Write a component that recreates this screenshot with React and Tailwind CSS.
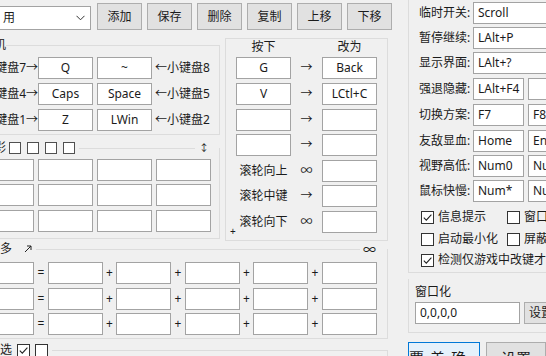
import React from "react";

const FONT = "font-['Noto_Sans','Noto_Sans_CJK_SC',sans-serif]";

function Key({ children, className = "" }) {
  return (
    <div
      className={`h-[22px] shrink-0 bg-white border border-[#a3a3a3] flex items-center justify-center whitespace-nowrap overflow-hidden ${className}`}
    >
      {children}
    </div>
  );
}

function Field({ children, className = "" }) {
  return (
    <div
      className={`h-[22px] shrink-0 bg-white border border-[#a3a3a3] flex items-center pl-[4px] whitespace-nowrap overflow-hidden ${className}`}
    >
      {children}
    </div>
  );
}

function Btn({ children, className = "" }) {
  return (
    <div
      className={`shrink-0 bg-[#e1e1e1] border border-[#adadad] flex items-center justify-center whitespace-nowrap ${className}`}
    >
      {children}
    </div>
  );
}

function Check({ checked = false }) {
  return (
    <div className="w-[13px] h-[13px] shrink-0 border border-[#333333] bg-white flex items-center justify-center">
      {checked && (
        <svg width="11" height="11" viewBox="0 0 11 11">
          <path d="M1.8 5.6 L4.3 8.1 L9.4 2.6" fill="none" stroke="#222" strokeWidth="1.1" />
        </svg>
      )}
    </div>
  );
}

function Square() {
  return <div className="w-[12px] h-[12px] shrink-0 border border-[#505050] bg-white" />;
}

const rowsA = [
  { l: "小键盘7→", a: "Q", b: "~", r: "←小键盘8" },
  { l: "小键盘4→", a: "Caps", b: "Space", r: "←小键盘5" },
  { l: "小键盘1→", a: "Z", b: "LWin", r: "←小键盘2" },
];

const rowsB = [
  { a: "G", m: "→", b: "Back", mt: "mt-[2px]" },
  { a: "V", m: "→", b: "LCtl+C", mt: "mt-[4px]" },
  { a: "", m: "→", b: "", mt: "mt-[4px]" },
  { a: "", m: "→", b: "", mt: "mt-[3px]" },
  { t: "滚轮向上", m: "∞", b: "", mt: "mt-[4px]" },
  { t: "滚轮中键", m: "→", b: "", mt: "mt-[3px]" },
  { t: "滚轮向下", m: "∞", b: "", mt: "mt-[4px]", plus: true },
];

const rowsR = [
  { l: "临时开关:", a: "Scroll", mt: "" },
  { l: "暂停继续:", a: "LAlt+P", mt: "mt-[3px]" },
  { l: "显示界面:", a: "LAlt+?", mt: "mt-[3px]" },
  { l: "强退隐藏:", a: "LAlt+F4", b: "", mt: "mt-[4px]" },
  { l: "切换方案:", a: "F7", b: "F8", mt: "mt-[4px]" },
  { l: "友敌显血:", a: "Home", b: "End", mt: "mt-[4px]" },
  { l: "视野高低:", a: "Num0", b: "Num.", mt: "mt-[3px]" },
  { l: "鼠标快慢:", a: "Num*", b: "Num/", mt: "mt-[3px]" },
];

export default function App() {
  return (
    <div
      className={`w-[546px] h-[356px] overflow-hidden bg-[#f0f0f0] flex text-[12px] leading-none text-[#1b1b1b] ${FONT}`}
    >
      {/* LEFT PART */}
      <div className="w-[400px] shrink-0 flex flex-col">
        {/* toolbar */}
        <div className="flex items-end h-[30px] shrink-0">
          <div className="w-[91px] h-[24px] bg-white border border-[#a3a3a3] border-l-0 flex items-center justify-between pl-[3px] pr-[5px]">
            <span>用</span>
            <svg width="9" height="6" viewBox="0 0 9 6">
              <path d="M0.5 0.8 L4.5 4.8 L8.5 0.8" fill="none" stroke="#333" strokeWidth="1" />
            </svg>
          </div>
          <div className="ml-[6px] flex gap-[5px]">
            {["添加", "保存", "删除", "复制", "上移", "下移"].map((t) => (
              <Btn key={t} className="w-[45px] h-[27px]">
                {t}
              </Btn>
            ))}
          </div>
        </div>

        {/* main row */}
        <div className="flex h-[211px] shrink-0">
          <div className="w-[220px] shrink-0 flex flex-col">
            {/* group A */}
            <fieldset className="-ml-[20px] mt-[7px] w-[240px] border border-[#dcdcdc] pb-[3px]">
              <legend className="ml-[13px] h-[16px] leading-[16px]">机</legend>
              <div className="flex flex-col gap-[4px] pt-[4px]">
                {rowsA.map((r) => (
                  <div key={r.a} className="flex items-center h-[22px]">
                    <div className="w-[57px] shrink-0 flex justify-end whitespace-nowrap">{r.l}</div>
                    <Key className="w-[55px]">{r.a}</Key>
                    <Key className="w-[55px] ml-[4px]">{r.b}</Key>
                    <div className="ml-[3px] whitespace-nowrap">{r.r}</div>
                  </div>
                ))}
              </div>
            </fieldset>

            {/* group C */}
            <fieldset className="-ml-[20px] mt-[5px] w-[240px] border border-[#dcdcdc] pb-[6px]">
              <legend className="w-full h-[16px] flex items-center">
                <span className="ml-[13px] leading-[16px]">彩</span>
                <div className="ml-[3px] flex gap-[6px]">
                  <Square />
                  <Square />
                  <Square />
                  <Square />
                </div>
                <div className="flex-1 h-px bg-[#dcdcdc] ml-[4px] mr-[4px]" />
                <span className="text-[10px] mr-[10px]">↕</span>
              </legend>
              <div className="flex flex-col pt-[3px]">
                {["mt-0", "mt-[3px]", "mt-[4px]"].map((m) => (
                  <div key={m} className={`flex h-[22px] gap-[4px] ${m}`}>
                    <Key className="w-[53px]" />
                    <Key className="w-[55px]" />
                    <Key className="w-[55px]" />
                    <Key className="w-[55px]" />
                  </div>
                ))}
              </div>
            </fieldset>
          </div>

          {/* group B */}
          <fieldset className="ml-[5px] mt-[8px] w-[163px] h-[203px] border border-[#dcdcdc] px-[10px]">
            <div className="flex h-[16px] items-center">
              <div className="w-[55px] text-center">按下</div>
              <div className="w-[31px]" />
              <div className="w-[55px] text-center">改为</div>
            </div>
            {rowsB.map((r, i) => (
              <div key={i} className={`relative flex h-[22px] items-center ${r.mt}`}>
                {r.t ? (
                  <div className="w-[55px] text-center whitespace-nowrap">{r.t}</div>
                ) : (
                  <Key className="w-[55px]">{r.a}</Key>
                )}
                <div className="w-[31px] text-center">{r.m}</div>
                <Key className="w-[55px]">{r.b}</Key>
                {r.plus && (
                  <span className="absolute left-[-6px] top-[15px] text-[10px] leading-none">+</span>
                )}
              </div>
            ))}
          </fieldset>
        </div>

        {/* group D */}
        <fieldset className="-ml-[20px] w-[408px] border border-[#dcdcdc] pb-[3px] shrink-0">
          <legend className="w-full h-[16px] flex items-center">
            <span className="ml-[7px] leading-[16px] whitespace-nowrap">更多</span>
            <svg className="ml-[12px]" width="8" height="8" viewBox="0 0 8 8">
              <path d="M1 7 L7 1 M3 1 L7 1 L7 5" fill="none" stroke="#222" strokeWidth="1" />
            </svg>
            <div className="flex-1 h-px bg-[#dcdcdc] ml-[4px] mr-[3px]" />
            <span className="mr-[11px] text-[13px]">∞</span>
          </legend>
          <div className="flex flex-col pt-[5px]">
            {["mt-0", "mt-[4px]", "mt-[3px]"].map((m) => (
              <div key={m} className={`flex h-[22px] items-center ${m}`}>
                <Key className="w-[53px]" />
                <div className="w-[14px] text-center">=</div>
                <Key className="w-[55px]" />
                <div className="w-[13px] text-center">+</div>
                <Key className="w-[55px]" />
                <div className="w-[14px] text-center">+</div>
                <Key className="w-[55px]" />
                <div className="w-[13px] text-center">+</div>
                <Key className="w-[55px]" />
                <div className="w-[14px] text-center">+</div>
                <Key className="w-[55px]" />
              </div>
            ))}
          </div>
        </fieldset>

        {/* group E */}
        <fieldset className="-ml-[20px] mt-[3px] w-[408px] h-[40px] border border-[#dcdcdc] shrink-0">
          <legend className="w-full h-[16px] flex items-center">
            <span className="ml-[7px] leading-[16px] whitespace-nowrap">切选</span>
            <div className="ml-[5px]">
              <Check checked />
            </div>
            <div className="ml-[5px]">
              <Check />
            </div>
            <div className="flex-1 h-px bg-[#dcdcdc] ml-[4px]" />
          </legend>
        </fieldset>
      </div>

      {/* RIGHT PART */}
      <div className="flex-1 flex flex-col min-w-0">
        <fieldset className="ml-[8px] -mt-[12px] w-[200px] border border-[#dcdcdc] pl-[10px] pt-[13px] pb-[4px] shrink-0">
          {rowsR.map((r) => (
            <div key={r.l} className={`flex items-center h-[22px] ${r.mt}`}>
              <div className="w-[54px] shrink-0 whitespace-nowrap">{r.l}</div>
              {r.b === undefined ? (
                <Field className="w-[100px]">{r.a}</Field>
              ) : (
                <>
                  <Field className="w-[51px]">{r.a}</Field>
                  <Field className="w-[51px] ml-[4px]">{r.b}</Field>
                </>
              )}
            </div>
          ))}
          <div className="mt-[7px] flex items-center h-[16px] pl-[2px]">
            <div className="w-[86px] flex items-center">
              <Check checked />
              <span className="ml-[4px] whitespace-nowrap">信息提示</span>
            </div>
            <Check />
            <span className="ml-[4px] whitespace-nowrap">窗口置顶</span>
          </div>
          <div className="mt-[6px] flex items-center h-[16px] pl-[2px]">
            <div className="w-[86px] flex items-center">
              <Check />
              <span className="ml-[4px] whitespace-nowrap">启动最小化</span>
            </div>
            <Check />
            <span className="ml-[4px] whitespace-nowrap">屏蔽热键</span>
          </div>
          <div className="mt-[5px] flex items-center h-[16px] pl-[2px]">
            <Check checked />
            <span className="ml-[4px] whitespace-nowrap">检测仅游戏中改键才生效</span>
          </div>
        </fieldset>

        {/* 窗口化 */}
        <div className="ml-[8px] mt-[6px] w-[200px] h-[54px] border border-[#dcdcdc] border-t-0 pl-[6px] pt-[6px] shrink-0">
          <div className="h-[14px] leading-[14px]">窗口化</div>
          <div className="mt-[3px] flex items-center">
            <Field className="w-[105px] h-[21px]">0,0,0,0</Field>
            <Btn className="ml-[4px] w-[60px] h-[22px] justify-start pl-[4px]">设置</Btn>
          </div>
        </div>

        <div className="ml-[8px] mt-[9px] flex gap-[6px] shrink-0">
          <div className="w-[99px] h-[26px] border border-[#0078d7] bg-[#e5f1fb] flex items-start justify-center pt-[8px] text-[15px] tracking-[6px]">
            覆盖确认
          </div>
          <Btn className="w-[60px] h-[26px] items-start pt-[8px] text-[15px]">设置</Btn>
        </div>
      </div>
    </div>
  );
}
